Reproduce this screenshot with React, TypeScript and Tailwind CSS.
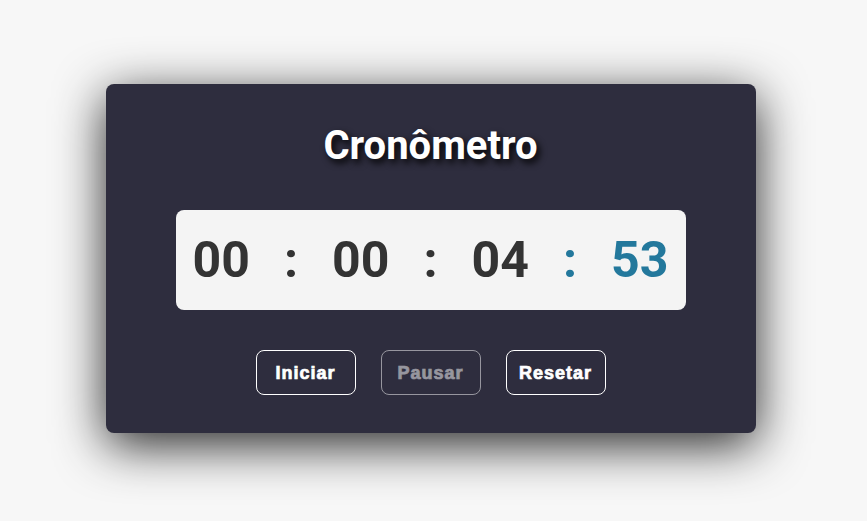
import React, { useState } from 'react';

const pad = (n: number) => n.toString().padStart(2, '0');

const App: React.FC = () => {
  const [time] = useState({ h: 0, m: 0, s: 4, cs: 53 });
  const [running] = useState(false);

  return (
    <div className="flex min-h-screen w-full items-center justify-center bg-[#f7f7f7] pb-[4px] pr-[6px]">
      <div className="flex w-[650px] flex-col items-center gap-10 rounded-lg bg-[#2e2d3e] pb-[38px] pt-[38px] shadow-[0_12px_50px_rgba(0,0,0,0.85)]">
        <h1 className="font-['Roboto',sans-serif] text-[40px] font-bold leading-[48px] text-white [text-shadow:3px_4px_7px_rgba(0,0,0,0.95)]">
          Cronômetro
        </h1>

        <div className="flex h-[100px] w-[510px] items-center justify-between rounded-lg bg-[#f4f4f4] px-[17px] font-['Roboto',sans-serif] text-[50px] font-bold leading-none text-[#333333]">
          <span>{pad(time.h)}</span>
          <span>:</span>
          <span>{pad(time.m)}</span>
          <span>:</span>
          <span>{pad(time.s)}</span>
          <span className="text-[#23789c]">:</span>
          <span className="text-[#23789c]">{pad(time.cs)}</span>
        </div>

        <div className="flex gap-[25px] font-['Liberation_Sans',Arial,sans-serif] text-[18px] font-bold tracking-[1px] text-white [-webkit-text-stroke:0.7px_currentColor]">
          <button className="h-[45px] w-[100px] rounded-lg border border-white pt-[2px]">
            Iniciar
          </button>
          <button
            disabled={!running}
            className="h-[45px] w-[100px] rounded-lg border border-white pt-[2px] disabled:opacity-50"
          >
            Pausar
          </button>
          <button className="h-[45px] w-[100px] rounded-lg border border-white pt-[2px]">
            Resetar
          </button>
        </div>
      </div>
    </div>
  );
};

export default App;
